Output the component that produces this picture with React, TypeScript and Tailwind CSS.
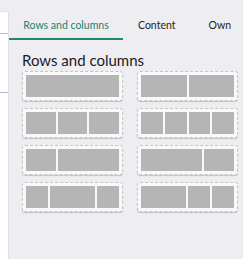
import React from 'react';

const layouts: number[][][] = [
  [[1], [1, 1]],
  [[1, 1, 1], [1, 1, 1, 1]],
  [[1, 2], [2, 1]],
  [[1, 2, 1], [2, 1, 1]],
];

const LayoutCard: React.FC<{ parts: number[] }> = ({ parts }) => (
  <div className="h-[30px] rounded-[3px] border border-dashed border-[#c4c4c4] bg-[#f9f9f9] p-[3px] shadow-[0_1px_1px_rgba(0,0,0,0.18)] flex gap-[2px]">
    {parts.map((p, i) => (
      <div key={i} className="bg-[#b5b5b5] h-full" style={{ flex: p }} />
    ))}
  </div>
);

const App: React.FC = () => {
  return (
    <div
      className="w-[244px] h-[260px] bg-white pr-px pb-px overflow-hidden"
      style={{ fontFamily: 'Lato, "Noto Sans", sans-serif' }}
    >
      <div className="flex h-full bg-[#eeedf2]">
        <div className="w-[9px] flex flex-col">
          <div className="h-[11px]" />
          <div className="flex-1 bg-white border-r border-t border-[#dbe2ea]">
            <div className="h-[22px] border-b border-[#bdbdbd]" />
            <div className="h-[59px] border-b border-[#bdbdbd]" />
          </div>
        </div>

        <div className="flex-1 flex flex-col min-w-0">
          <div className="flex h-[40px] text-[10.5px] leading-[15px] whitespace-nowrap">
            <div className="w-[114px] border-b-2 border-[#1b8a66] text-[#13876a] flex justify-center pt-[18px]">
              Rows and columns
            </div>
            <div className="pl-[15px] pt-[18px] text-[#222]">Content</div>
            <div className="pl-[33px] pt-[18px] text-[#222]">Own</div>
          </div>

          <div className="pl-[13px]">
            <h2 className="text-[15px] leading-[20px] text-[#1c1c1c] mt-[10px] whitespace-nowrap">
              Rows and columns
            </h2>
            <div className="grid grid-cols-2 gap-x-[14px] gap-y-[7px] w-[216px] mt-[1px]">
              {layouts.map((row, r) =>
                row.map((parts, c) => <LayoutCard key={`${r}-${c}`} parts={parts} />)
              )}
            </div>
          </div>
        </div>
      </div>
    </div>
  );
};

export default App;
